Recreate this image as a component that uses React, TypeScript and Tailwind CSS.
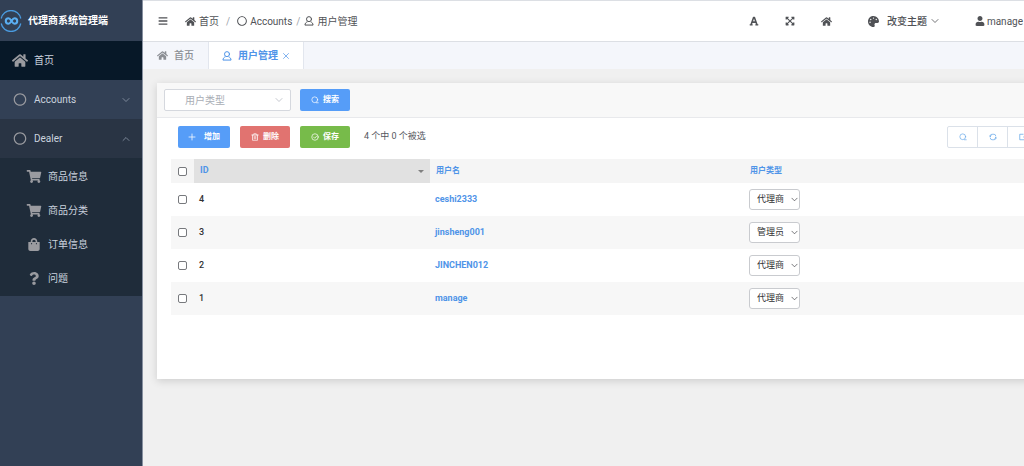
import { useState } from "react";
import type { ReactNode } from "react";
import clsx from "clsx";
import {
  FaBars,
  FaExpandArrowsAlt,
  FaFont,
  FaHome,
  FaPalette,
  FaQuestion,
  FaRegCircle,
  FaShoppingBag,
  FaShoppingCart,
  FaUser,
} from "react-icons/fa";

interface IconProps {
  className?: string;
}

interface LineIconProps extends IconProps {
  children: ReactNode;
  strokeWidth?: number;
}

interface User {
  id: number;
  name: string;
  type: string;
}

const USERS: User[] = [
  { id: 4, name: "ceshi2333", type: "代理商" },
  { id: 3, name: "jinsheng001", type: "管理员" },
  { id: 2, name: "JINCHEN012", type: "代理商" },
  { id: 1, name: "manage", type: "代理商" },
];

const DEALER_ITEMS = [
  { label: "商品信息", icon: FaShoppingCart },
  { label: "商品分类", icon: FaShoppingCart },
  { label: "订单信息", icon: FaShoppingBag },
  { label: "问题", icon: FaQuestion },
];

function LineIcon({ className, children, strokeWidth = 1 }: LineIconProps) {
  return (
    <svg
      viewBox="0 0 16 16"
      fill="none"
      stroke="currentColor"
      strokeWidth={strokeWidth}
      strokeLinecap="round"
      strokeLinejoin="round"
      aria-hidden="true"
      className={clsx("shrink-0", className)}
    >
      {children}
    </svg>
  );
}

function ChevronIcon({ className }: IconProps) {
  return (
    <LineIcon className={className} strokeWidth={1.6}>
      <path d="M2 5l6 6 6-6" />
    </LineIcon>
  );
}

function UserIcon({ className }: IconProps) {
  return (
    <LineIcon className={className} strokeWidth={1.6}>
      <circle cx="8" cy="5" r="4" />
      <path d="M4.800 9.500C3 10 2 11.500 1.500 14.500h13C14 11.500 13 10 11.200 9.500" />
    </LineIcon>
  );
}

function SearchIcon({ className }: IconProps) {
  return (
    <LineIcon className={className} strokeWidth={1.4}>
      <circle cx="7.500" cy="7.500" r="5.800" />
      <path d="M11 13.500h3.500" />
    </LineIcon>
  );
}

function RefreshIcon({ className }: IconProps) {
  return (
    <LineIcon className={className} strokeWidth={1.5}>
      <path d="M2.500 7V6a3.500 3.500 0 0 1 3.500-3.500h4A3.500 3.500 0 0 1 13.500 6M.8 5.500l1.700 2 1.700-2" />
      <path d="M13.500 9v1a3.500 3.500 0 0 1-3.500 3.500H6A3.500 3.500 0 0 1 2.500 10M15.200 10.500l-1.700-2-1.700 2" />
    </LineIcon>
  );
}

function Logo() {
  return (
    <svg
      viewBox="0 0 22 22"
      fill="none"
      stroke="#4a9be0"
      aria-hidden="true"
      className="size-[22px] shrink-0"
    >
      <path strokeWidth="1.300" d="M1.200 8.500A10 10 0 0 1 20.800 8.500M20.800 13.500A10 10 0 0 1 1.200 13.500" />
      <path
        stroke="#5aaef2"
        strokeWidth="2.100"
        d="M11.500 11C10.300 9.200 9.500 8.300 8.500 8.300a2.700 2.700 0 0 0 0 5.400c1 0 1.800-.9 3-2.700s2-2.700 3-2.700a2.700 2.700 0 0 1 0 5.400c-1 0-1.800-.9-3-2.700z"
      />
    </svg>
  );
}

function Sidebar() {
  const [open, setOpen] = useState(true);

  return (
    <aside className="flex w-[143px] shrink-0 flex-col border-r border-[#8790a0] bg-[#324055] text-[#cbd3df]">
      <div className="flex h-[41px] items-center gap-[6px] text-[10px] font-bold text-white">
        <Logo />
        <span>代理商系统管理端</span>
      </div>

      <nav>
        <a href="#home" className="flex h-[39px] items-center gap-[6px] bg-[#071828] px-3">
          <FaHome className="w-4 text-[15px] text-[#9a9ba0]" />
          <span>首页</span>
        </a>
        <button type="button" className="flex h-[39px] w-full items-center gap-[6px] px-3">
          <FaRegCircle className="w-4 text-[13px] text-[#9a9ba0]" />
          <span>Accounts</span>
          <ChevronIcon className="ml-auto size-2 text-[#8f9aab]" />
        </button>
        <button
          type="button"
          onClick={() => setOpen(!open)}
          aria-expanded={open}
          className="flex h-[39px] w-full items-center gap-[6px] bg-[#293444] px-3"
        >
          <FaRegCircle className="w-4 text-[13px] text-[#9a9ba0]" />
          <span>Dealer</span>
          <ChevronIcon className={clsx("ml-auto size-2 text-[#8f9aab]", open && "rotate-180")} />
        </button>

        {open && (
          <div className="bg-[#1f2c3a] py-px">
            {DEALER_ITEMS.map(({ label, icon: Icon }) => (
              <a key={label} href="#dealer" className="flex h-[34px] items-center gap-[6px] pl-[26px]">
                <Icon className="w-4 text-[13px] text-[#9a9ba0]" />
                <span>{label}</span>
              </a>
            ))}
          </div>
        )}
      </nav>
    </aside>
  );
}

function TopBar() {
  return (
    <header className="flex h-[42px] items-center border-t border-b border-[#dcdfe4] bg-white pr-5 pl-[15px] text-[#505256]">
      <button type="button" aria-label="菜单">
        <FaBars className="text-[10px]" />
      </button>

      <nav className="ml-[17px] flex items-center gap-[3px]">
        <a href="#home" className="flex items-center gap-[3px]">
          <FaHome className="text-[11px]" />
          首页
        </a>
        <span className="px-1 text-[#a0a4ab]">/</span>
        <a href="#accounts" className="flex items-center gap-[3px]">
          <FaRegCircle className="text-[10px]" />
          Accounts
        </a>
        <span className="px-px text-[#a0a4ab]">/</span>
        <a href="#users" className="flex items-center gap-[3px]">
          <UserIcon className="size-[10px]" />
          用户管理
        </a>
      </nav>

      <div className="ml-auto flex items-center">
        <div className="flex gap-[26px] text-[10px]">
          <button type="button" aria-label="字体">
            <FaFont />
          </button>
          <button type="button" aria-label="全屏">
            <FaExpandArrowsAlt />
          </button>
          <button type="button" aria-label="首页">
            <FaHome className="text-[11px]" />
          </button>
        </div>
        <button type="button" className="ml-9 flex items-center gap-2 font-medium">
          <FaPalette className="text-[11px]" />
          <span className="flex items-center gap-1">
            改变主题
            <ChevronIcon className="size-2" />
          </span>
        </button>
        <button type="button" className="ml-9 flex items-center gap-[2px]">
          <FaUser />
          manage
        </button>
      </div>
    </header>
  );
}

function Tabs() {
  return (
    <div className="flex h-[27px] bg-[#f4f6fb] font-medium">
      <button type="button" className="flex w-[65px] items-center justify-center gap-[6px] text-[#8b8e94]">
        <FaHome className="text-[11px]" />
        首页
      </button>
      <div className="flex w-24 items-center justify-center gap-1 border-x border-[#e2e6ee] bg-white font-bold text-[#4f94e8]">
        <button type="button" className="flex items-center gap-[6px]">
          <UserIcon className="size-[10px]" />
          用户管理
        </button>
        <button type="button" aria-label="关闭">
          <LineIcon className="size-2" strokeWidth={1.4}>
            <path d="M3 3l10 10M13 3L3 13" />
          </LineIcon>
        </button>
      </div>
    </div>
  );
}

interface ActionButtonProps {
  label: string;
  icon: ReactNode;
  className: string;
}

function ActionButton({ label, icon, className }: ActionButtonProps) {
  return (
    <button
      type="button"
      className={clsx(
        "flex h-[22px] items-center justify-center gap-1 rounded-[2px] text-[8px] font-bold text-white",
        className
      )}
    >
      {icon}
      {label}
    </button>
  );
}

function FilterBar() {
  return (
    <div className="flex h-[35px] items-center gap-[9px] border-b border-[#e8e9ec] bg-[#f8f8f8] px-[7px]">
      <div className="relative">
        <select
          aria-label="用户类型"
          defaultValue=""
          className="block h-[22px] w-[127px] appearance-none rounded-[2px] border border-[#d5d8de] bg-white pl-5 text-[#a9adb5]"
        >
          <option value="">用户类型</option>
          <option>代理商</option>
          <option>管理员</option>
        </select>
        <ChevronIcon className="pointer-events-none absolute top-[7px] right-2 size-2 text-[#b5b9c1]" />
      </div>
      <ActionButton
        label="搜索"
        icon={<SearchIcon className="size-2" />}
        className="w-[50px] bg-[#569df8]"
      />
    </div>
  );
}

function Toolbar() {
  const iconButton =
    "flex w-[30px] items-center justify-center border-r border-[#dbe1e9] text-[#6cabe9] last:border-r-0";

  return (
    <div className="flex items-center pt-2 pr-1 pb-[11px] pl-[21px]">
      <div className="flex gap-[10px]">
        <ActionButton
          label="增加"
          icon={
            <LineIcon className="mr-1 size-2" strokeWidth={1.5}>
              <path d="M8 2v12M2 8h12" />
            </LineIcon>
          }
          className="w-[52px] bg-[#569df8]"
        />
        <ActionButton
          label="删除"
          icon={
            <LineIcon className="size-2" strokeWidth={1.4}>
              <path d="M1.500 4h13M5.500 4V1.500h5V4M3 4v10.500h10V4M6.500 7v4.500M9.500 7v4.500" />
            </LineIcon>
          }
          className="w-[50px] bg-[#e17370]"
        />
        <ActionButton
          label="保存"
          icon={
            <LineIcon className="size-2" strokeWidth={1.4}>
              <circle cx="8" cy="8" r="6.500" />
              <path d="M5 8l2.500 2.500L11.500 6" />
            </LineIcon>
          }
          className="w-[50px] bg-[#77bb4a]"
        />
      </div>
      <span className="ml-[14px] text-[9px] text-[#55585e]">4 个中 0 个被选</span>

      <div className="ml-auto flex h-[22px] rounded-[2px] border border-[#dbe1e9]">
        <button type="button" aria-label="搜索" className={iconButton}>
          <SearchIcon className="size-2" />
        </button>
        <button type="button" aria-label="刷新" className={iconButton}>
          <RefreshIcon className="size-2" />
        </button>
        <button type="button" aria-label="导出" className={iconButton}>
          <LineIcon className="size-2" strokeWidth={1.6}>
            <path d="M8 2.500H1.500v11h13V8M10.500 2.500h4v4M14.500 2.500L9 8" />
          </LineIcon>
        </button>
      </div>
    </div>
  );
}

function UserTable() {
  const checkbox =
    "block size-[9px] appearance-none rounded-[2px] border border-[#77797d] bg-white checked:bg-[#569df8]";

  return (
    <table className="ml-[14px] w-full table-fixed text-left text-[9px]">
      <colgroup>
        <col className="w-[23px]" />
        <col className="w-[236px]" />
        <col className="w-[314px]" />
        <col />
      </colgroup>
      <thead>
        <tr className="h-6 bg-[#f5f5f5] text-[8px] text-[#4f94e8]">
          <th className="pl-[7px]">
            <input type="checkbox" aria-label="全选" className={checkbox} />
          </th>
          <th className="bg-[#e1e1e1] px-[6px]">
            <div className="flex items-center justify-between text-[9px]">
              ID
              <svg viewBox="0 0 6 3" aria-hidden="true" className="h-[3px] w-[6px] fill-[#808080]">
                <path d="M0 0h6L3 3z" />
              </svg>
            </div>
          </th>
          <th className="px-[6px]">用户名</th>
          <th className="px-[6px]">用户类型</th>
        </tr>
      </thead>
      <tbody>
        {USERS.map((user) => (
          <tr key={user.id} className="h-[33px] even:bg-[#f7f7f7]">
            <td className="pl-[7px]">
              <input type="checkbox" aria-label={user.name} className={checkbox} />
            </td>
            <td className="px-[5px] font-medium text-[#303133]">{user.id}</td>
            <td className="px-[5px]">
              <a href="#user" className="font-bold text-[#4f94e8]">
                {user.name}
              </a>
            </td>
            <td className="px-[5px]">
              <div className="relative w-[51px]">
                <select
                  aria-label={`${user.name} 用户类型`}
                  defaultValue={user.type}
                  className="block h-[21px] w-full appearance-none rounded-[3px] border border-[#c9cbcf] bg-white pl-[7px] text-[#303133]"
                >
                  <option>代理商</option>
                  <option>管理员</option>
                </select>
                <ChevronIcon className="pointer-events-none absolute top-[7px] right-[2px] size-[7px] text-[#404246]" />
              </div>
            </td>
          </tr>
        ))}
      </tbody>
    </table>
  );
}

export default function App() {
  return (
    <div className="flex min-h-screen overflow-hidden bg-[#f0f0f0] font-['Roboto','Noto_Sans_CJK_SC',sans-serif] text-[10px]">
      <Sidebar />
      <main className="min-w-0 flex-1 overflow-hidden">
        {/* Below this width the right side runs out of view */}
        <div className="min-w-[900px]">
          <TopBar />
          <Tabs />
          <section className="mt-[14px] ml-[14px] overflow-hidden bg-white pb-16 shadow-[0_2px_8px_rgba(0,0,0,0.15)]">
            <FilterBar />
            <Toolbar />
            <UserTable />
          </section>
        </div>
      </main>
    </div>
  );
}
